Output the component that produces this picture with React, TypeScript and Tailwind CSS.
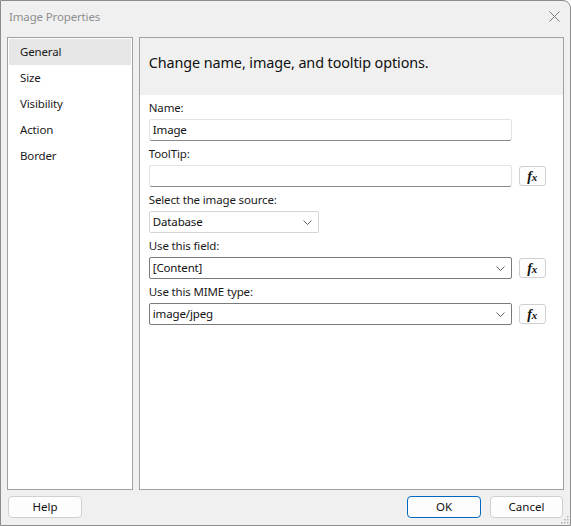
import React from 'react';

const font = { fontFamily: '"Noto Sans", "Open Sans", sans-serif' };

function Chevron() {
  return (
    <svg width="9" height="5" viewBox="0 0 9 5" className="shrink-0">
      <path d="M0.5 0.5 L4.5 4.5 L8.5 0.5" fill="none" stroke="#606060" strokeWidth="1" />
    </svg>
  );
}

function FxButton() {
  return (
    <div className="ml-[7px] flex h-[20px] w-[27px] items-center justify-center rounded-[3px] border border-[#d0d0d0] bg-[#fdfdfd]">
      <span className="font-bold italic leading-none text-[#111]" style={{ fontFamily: '"Liberation Serif", serif' }}>
        <span className="text-[14px]">f</span>
        <span className="text-[11px]">x</span>
      </span>
    </div>
  );
}

function Label({ children }: { children: React.ReactNode }) {
  return <div className="h-[16px] text-[11.5px] leading-[16px] tracking-[-0.15px] text-[#1a1a1a]">{children}</div>;
}

function TextBox({ value }: { value?: string }) {
  return (
    <div className="flex h-[22px] w-[363px] items-center rounded-[3px] border border-[#e2e2e2] border-b-[#8a8a8a] bg-white px-[3px] pb-[1px] text-[11.5px] tracking-[-0.15px] text-[#111]">
      {value}
    </div>
  );
}

function Combo({ value, width, dark }: { value: string; width: string; dark?: boolean }) {
  return (
    <div
      className={`flex h-[22px] ${width} items-center justify-between rounded-[2px] border ${dark ? 'border-[#7a7a7a]' : 'border-[#d4d4d4]'} bg-white pl-[3px] pr-[6px] text-[11.5px] tracking-[-0.15px] text-[#111]`}
    >
      <span>{value}</span>
      <Chevron />
    </div>
  );
}

function Field({ label, children }: { label: string; children: React.ReactNode }) {
  return (
    <div className="mb-[5px] flex flex-col gap-[3px]">
      <Label>{label}</Label>
      <div className="flex items-center">{children}</div>
    </div>
  );
}

const pages = ['General', 'Size', 'Visibility', 'Action', 'Border'];

export default function App() {
  return (
    <div style={font} className="relative flex h-[526px] w-[571px] flex-col overflow-hidden rounded-tr-[8px] border border-[#8c8c8c] bg-[#f0f0f0]">
      {/* Title bar */}
      <div className="flex h-[36px] shrink-0 items-center justify-between pb-[5px] pl-[8px] pr-[10px]">
        <span className="text-[11.5px] tracking-[-0.15px] text-[#8f8f8f]">Image Properties</span>
        <svg width="11" height="11" viewBox="0 0 11 11">
          <path d="M0.5 0.5 L10.5 10.5 M10.5 0.5 L0.5 10.5" stroke="#7a7a7a" strokeWidth="1" />
        </svg>
      </div>

      {/* Panels */}
      <div className="flex h-[453px] shrink-0 gap-[6px] px-[6px]">
        <div className="w-[126px] border border-[#a0a0a0] bg-white p-px">
          {pages.map((p, i) => (
            <div
              key={p}
              className={`flex h-[26px] items-center pl-[11px] text-[11.5px] tracking-[-0.15px] text-[#1a1a1a] ${i === 0 ? 'bg-[#e6e6e6]' : ''}`}
            >
              {p}
            </div>
          ))}
        </div>

        <div className="flex w-[426px] flex-col border border-[#a0a0a0] bg-white">
          <div className="flex h-[57px] shrink-0 items-center bg-[#f0f0f0] pb-[7px] pl-[9px] text-[14.4px] tracking-[-0.1px] text-[#111]">
            Change name, image, and tooltip options.
          </div>
          <div className="pl-[9px] pt-[5px]">
            <Field label="Name:">
              <TextBox value="Image" />
            </Field>
            <Field label="ToolTip:">
              <TextBox />
              <FxButton />
            </Field>
            <Field label="Select the image source:">
              <Combo value="Database" width="w-[170px]" />
            </Field>
            <Field label="Use this field:">
              <Combo value="[Content]" width="w-[363px]" dark />
              <FxButton />
            </Field>
            <Field label="Use this MIME type:">
              <Combo value="image/jpeg" width="w-[363px]" dark />
              <FxButton />
            </Field>
          </div>
        </div>
      </div>

      {/* Buttons */}
      <div className="mt-[6px] flex items-center px-[7px]">
        <button className="h-[22px] w-[74px] rounded-[4px] border border-[#d0d0d0] bg-[#fdfdfd] text-[11.5px] text-[#111]">Help</button>
        <div className="flex-1" />
        <button className="h-[22px] w-[74px] rounded-[4px] border border-[#0067c0] bg-[#fdfdfd] text-[11.5px] text-[#111]">OK</button>
        <button className="ml-[9px] h-[22px] w-[73px] rounded-[4px] border border-[#d0d0d0] bg-[#fdfdfd] text-[11.5px] text-[#111]">Cancel</button>
      </div>

      {/* Resize grip */}
      <svg width="8" height="8" viewBox="0 0 8 8" className="absolute bottom-[1px] right-[1px]">
        <rect x="6" y="0" width="1.5" height="1.5" fill="#b0b0b0" />
        <rect x="3" y="3" width="1.5" height="1.5" fill="#b0b0b0" />
        <rect x="6" y="3" width="1.5" height="1.5" fill="#b0b0b0" />
        <rect x="0" y="6" width="1.5" height="1.5" fill="#b0b0b0" />
        <rect x="3" y="6" width="1.5" height="1.5" fill="#b0b0b0" />
        <rect x="6" y="6" width="1.5" height="1.5" fill="#b0b0b0" />
      </svg>
    </div>
  );
}
